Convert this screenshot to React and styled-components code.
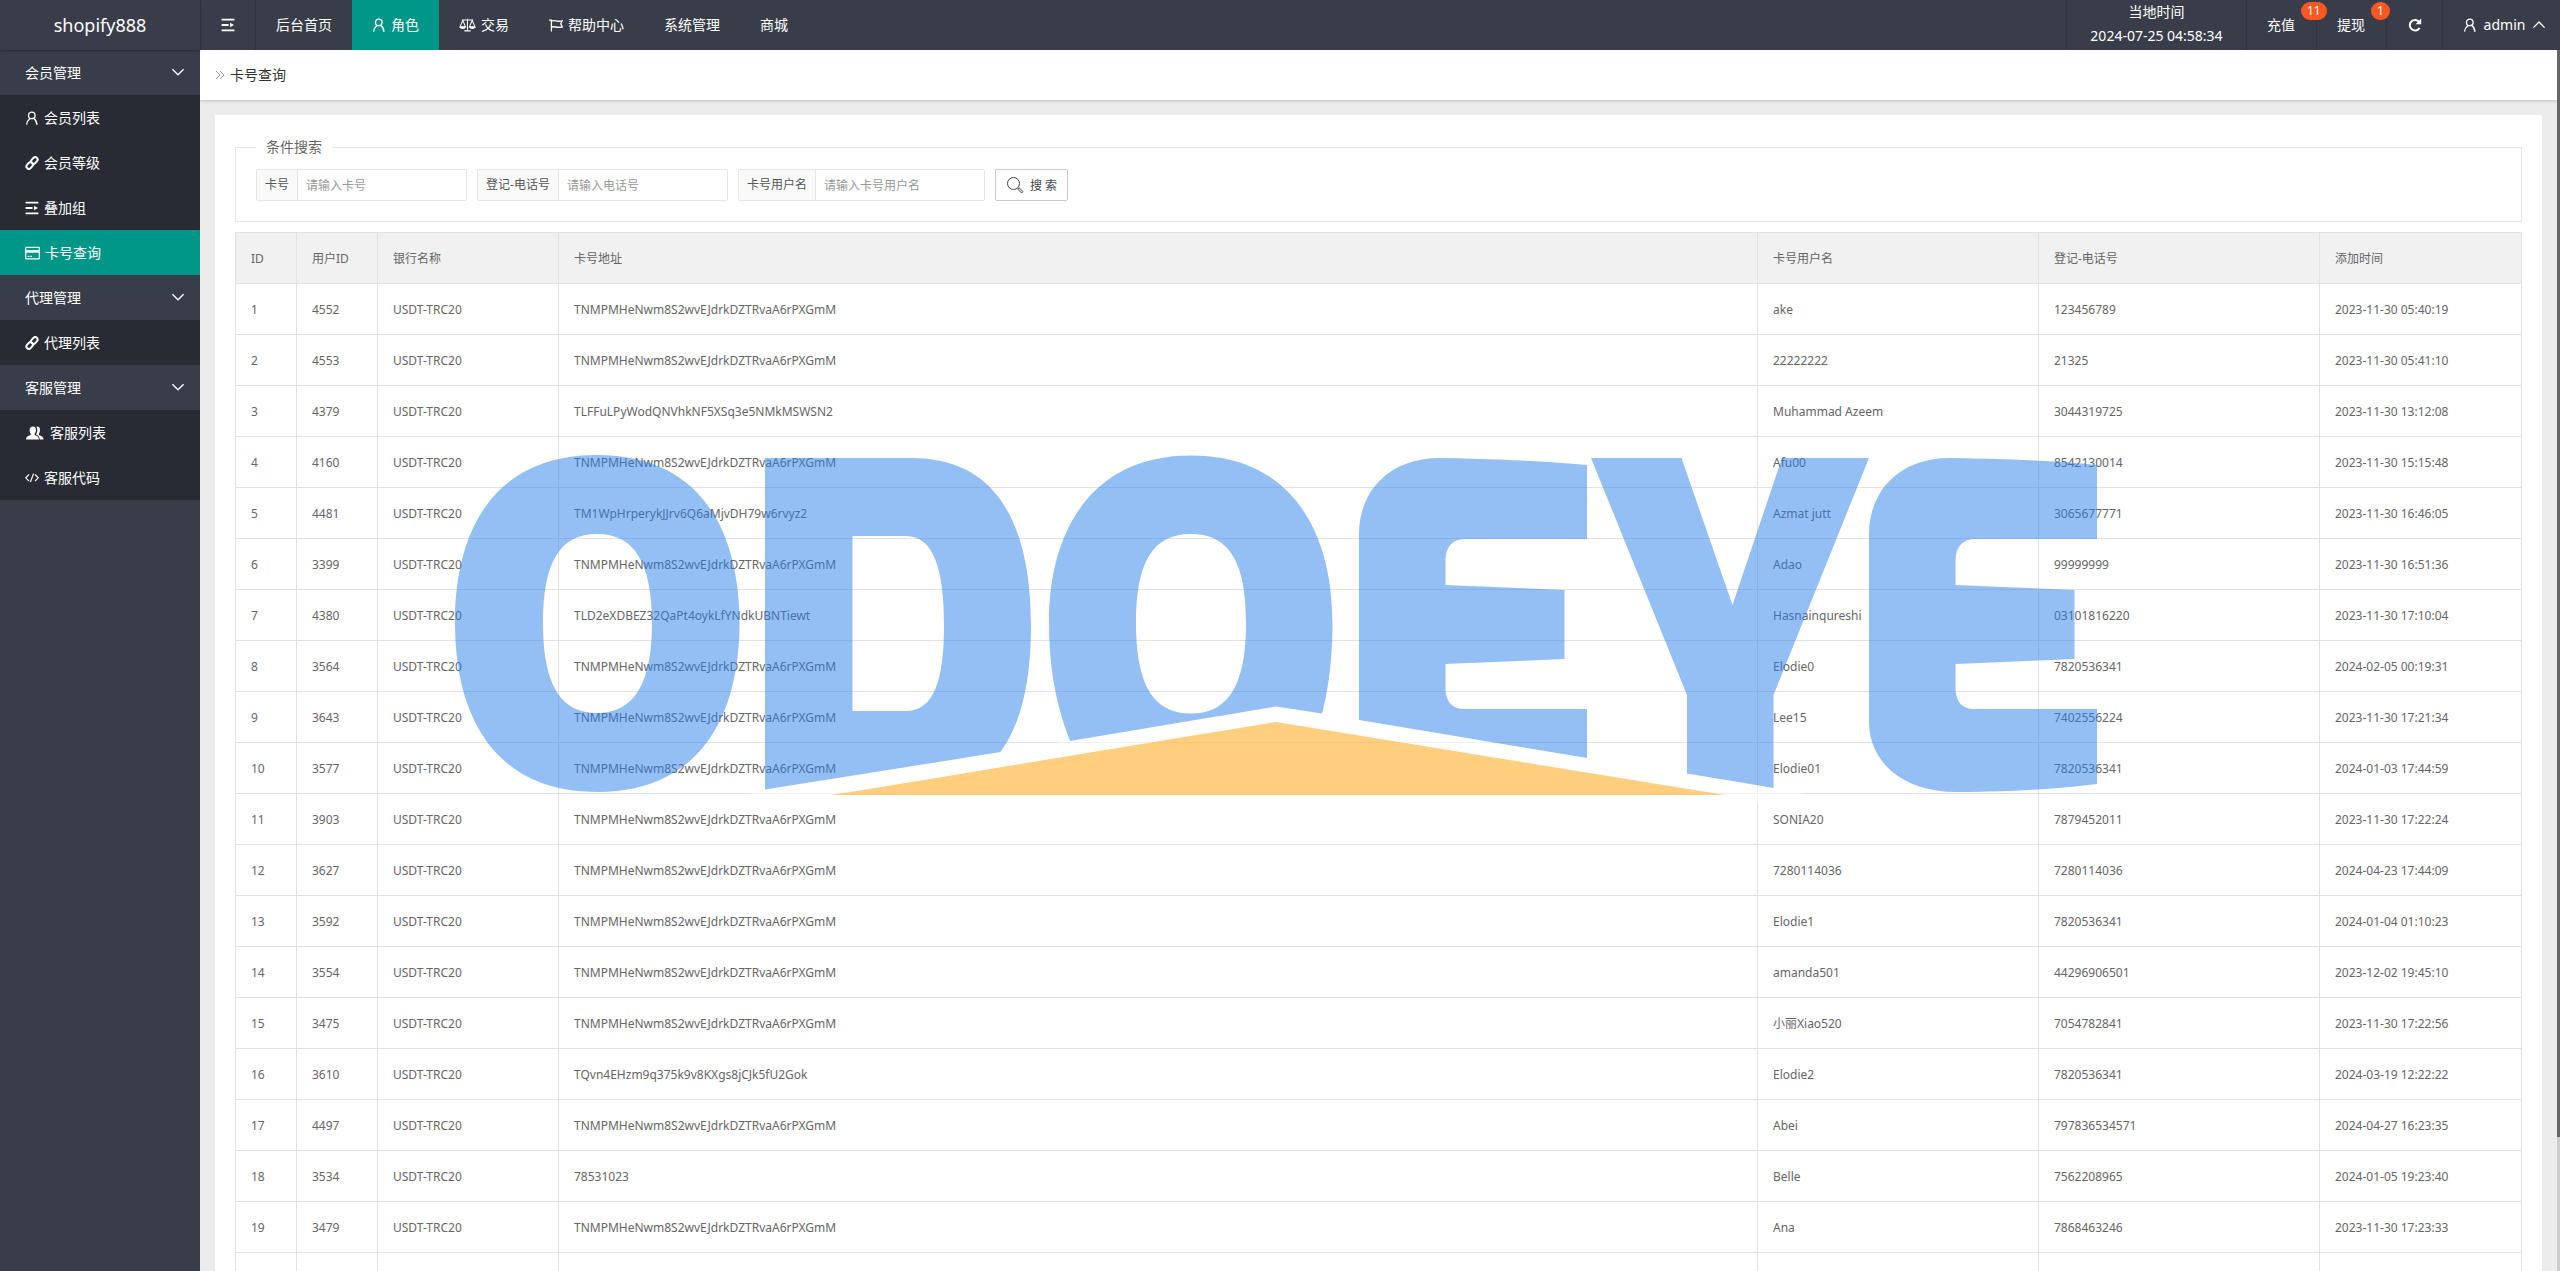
import React from "react";
import styled, { createGlobalStyle, css } from "styled-components";

const Global = createGlobalStyle`
  *, *::before, *::after { box-sizing: border-box; }
  html, body { margin: 0; height: 100%; overflow: hidden; }
  body, input, button, legend {
    font-family: "Noto Sans", "Noto Sans CJK SC", sans-serif;
  }
  body { font-size: 14px; line-height: 24px; color: #666; background: #fff; }
  a { color: inherit; text-decoration: none; }
`;

/* ---------- icons ---------- */
const Svg = styled.svg`
  flex: none;
  display: block;
  width: ${(p) => p.$w || 14}px;
  height: ${(p) => p.$h || 14}px;
  fill: none;
  stroke: currentColor;
  stroke-width: ${(p) => p.$sw || 1.3};
`;

const UserIcon = () => (
  <Svg viewBox="0 0 14 14">
    <circle cx="6.8" cy="4.4" r="3.3" />
    <path d="M1.600 13.600C1.800 10.800 3 9.200 5 7.600M8.800 7.400c2 1.400 2.900 3.400 3 6.200M11 13.200h1.600" />
  </Svg>
);
const ScaleIcon = () => (
  <Svg $w={17} $h={14} viewBox="0 0 18 14" $sw={1.1}>
    <path d="M9 .4v12.600M3 1.800h12M5.600 13.200h6.800M4 2.200 1 9h6zM14 2.200 11 9h6z" />
    <path d="M.7 9.200c.6 2.600 6 2.600 6.600 0zM10.700 9.200c.6 2.600 6 2.600 6.600 0z" fill="currentColor" stroke="none" />
  </Svg>
);
const FlagIcon = () => (
  <Svg viewBox="0 0 14 14">
    <path d="M0 2.200h2.400M2.400 1.600v12M2.400 3.200c3.400-1.800 4.800 1.200 10.800-.4l-1.400 3 1.400 3.200c-6 1.400-7.400-1.400-10.800.2" />
  </Svg>
);
const ListIcon = () => (
  <Svg viewBox="0 0 14 14" $sw={1.8}>
    <path d="M.6 1.700h12.800M.6 12.300h12.800M.6 7h7" />
    <path d="M9 4.800v4.400L13 7z" fill="currentColor" stroke="none" />
  </Svg>
);
const LinkIcon = () => (
  <Svg viewBox="0 0 14 14" $sw={2}>
    <rect x="-3.700" y="-2.400" width="7.400" height="4.800" rx="2.400" transform="translate(9.300 4.500) rotate(-48)" />
    <rect x="-3.700" y="-2.400" width="7.400" height="4.800" rx="2.400" transform="translate(4.700 9.500) rotate(-48)" />
  </Svg>
);
const CardIcon = () => (
  <Svg $w={15} viewBox="0 0 15 14" $sw={1.2}>
    <rect x=".7" y="1.400" width="13.600" height="11.400" rx=".4" />
    <path d="M1 5.400h13" strokeWidth="2.600" />
    <path d="M2.600 10.400h1.800M5.400 10.400h1.600" />
  </Svg>
);
const GroupIcon = () => (
  <Svg $w={20} viewBox="0 0 20 14">
    <path
      fill="currentColor"
      stroke="none"
      d="M8 .4c2 0 3 1.500 3 3.500 0 1.600-.6 2.800-1.300 3.700v1.400c2.500.8 4.100 1.800 4.300 4.600H1c.2-2.800 1.800-3.800 4.700-4.600V7.600C5 6.700 4.600 5.500 4.600 3.900 4.600 1.900 6 .4 8 .4zM12.200.6c2 0 2.800 1.500 2.800 3.300 0 1.600-.5 2.800-1.200 3.700v1.400c2.900.8 4.600 1.800 4.800 4.600h-3.800c-.1-2.500-1.300-4.100-3.800-5.100.8-1.200 1.300-2.700 1.300-4.400 0-1.300-.3-2.300-.9-3.300z"
    />
  </Svg>
);
const CodeIcon = () => (
  <Svg viewBox="0 0 14 14" $sw={1.2}>
    <path d="M4 3.400.8 6.800 4 10.200M10 3.400l3.200 3.400-3.200 3.400M8.600 2.600 5.400 11" />
  </Svg>
);
const Chevron = ({ up }) => (
  <Svg viewBox="0 0 14 14">
    <path d={up ? "M1.400 9.600 7 4l5.600 5.600" : "M1.400 4.200 7 9.800l5.600-5.600"} />
  </Svg>
);
const RefreshIcon = () => (
  <Svg viewBox="0 0 14 14" $sw={2}>
    <path d="M11.600 10A5.300 5.300 0 1 1 11.200 3.800" />
    <path d="M13.200.6v5.600H7.600z" fill="currentColor" stroke="none" />
  </Svg>
);
const SearchIcon = () => (
  <Svg $w={18} $h={18} viewBox="0 0 18 18" $sw={1}>
    <circle cx="7.500" cy="7.500" r="6" />
    <path d="M11.800 13l1.200-1.200 4 3.800-1.400 1.400z" />
  </Svg>
);
const CrumbIcon = () => (
  <Svg $w={10} $h={10} viewBox="0 0 10 10" $sw={1}>
    <path d="M1 1l4 4-4 4M5 1l4 4-4 4" />
  </Svg>
);

/* ---------- shell ---------- */
const Shell = styled.div`
  display: grid;
  grid-template: 50px minmax(0, 1fr) / 200px minmax(0, 1fr);
  height: 100vh;
`;
const Brand = styled.h1`
  margin: 0;
  font-size: 18px;
  font-weight: 400;
  line-height: 50px;
  text-align: center;
  color: #fff;
  background: #393d49;
  box-shadow: 0 1px 2px rgba(0, 0, 0, 0.3);
  z-index: 1;
`;
const TopBar = styled.header`
  display: flex;
  justify-content: space-between;
  color: #fff;
  background: #393d49;
`;
const Bar = styled.div`
  display: flex;
`;
const edge = css`
  border-left: 1px solid #31343f;
`;
const BarItem = styled.a`
  display: flex;
  align-items: center;
  gap: 5px;
  height: 50px;
  padding: 0 20px;
  background: ${(p) => (p.$active ? "#009688" : "transparent")};
  ${(p) => p.$edge && edge}
`;
const Account = styled(BarItem)`
  justify-content: space-between;
  width: 118px;
  padding-right: 14px;
`;
const Toggle = styled.button`
  display: flex;
  align-items: center;
  justify-content: center;
  width: 56px;
  padding: 0;
  color: inherit;
  background: none;
  border: solid #31343f;
  border-width: 0 1px;
`;
const Clock = styled.div`
  ${edge}
  width: 180px;
  text-align: center;
  white-space: nowrap;
`;
const Counter = styled(BarItem)`
  position: relative;
  width: 70px;
`;
const Badge = styled.span`
  position: absolute;
  top: 2px;
  left: 54px;
  z-index: 1;
  padding: 0 6px;
  font-size: 12px;
  line-height: 18px;
  background: #ff5722;
  border-radius: 9px;
`;
const IconButton = styled(Toggle)`
  border-width: 0 0 0 1px;
`;

/* ---------- side menu ---------- */
const Side = styled.nav`
  background: #393d49;
  color: #fff;
`;
const GroupHead = styled.button`
  display: flex;
  align-items: center;
  justify-content: space-between;
  width: 100%;
  height: 45px;
  padding: 0 15px 2px 25px;
  font-size: 14px;
  color: inherit;
  background: none;
  border: 0;
`;
const SubList = styled.ul`
  margin: 0;
  padding: 0;
  list-style: none;
  background: #282b33;
`;
const SubItem = styled.a`
  display: flex;
  align-items: center;
  gap: 5px;
  height: 45px;
  padding-left: 25px;
  background: ${(p) => (p.$active ? "#009688" : "transparent")};
`;

/* ---------- page ---------- */
const Frame = styled.div`
  display: flex;
  min-height: 0;
`;
const Page = styled.main`
  flex: 1;
  min-width: 0;
  overflow: hidden;
  background: #ececec;
`;
const Crumb = styled.div`
  display: flex;
  align-items: center;
  gap: 5px;
  height: 50px;
  padding-left: 15px;
  color: #333;
  background: #fff;
  box-shadow: 0 1px 3px rgba(0, 0, 0, 0.2);
`;
const CrumbMark = styled.span`
  color: #999;
`;
const Card = styled.section`
  margin: 15px;
  padding: 20px;
  background: #fff;
`;
const Track = styled.div`
  width: 3px;
  background: #ccc;
`;
const Thumb = styled.div`
  height: 89%;
  background: #666;
`;

/* ---------- search form ---------- */
const SearchBox = styled.fieldset`
  margin: 0 0 10px;
  padding: 10px 20px 20px;
  border: 1px solid #e6e6e6;
`;
const Legend = styled.legend`
  padding: 0 10px;
`;
const FormRow = styled.form`
  display: flex;
  gap: 10px;
`;
const Field = styled.div`
  display: flex;
  height: 32px;
  font-size: 12px;
  line-height: 30px;
  border: 1px solid #e6e6e6;
  border-radius: 2px;
`;
const FieldLabel = styled.label`
  padding: 0 8px;
  color: #555;
  background: #fafafa;
  border-right: 1px solid #e6e6e6;
`;
const FieldInput = styled.input`
  width: 168px;
  padding: 0 8px;
  font-size: 12px;
  background: #fff;
  border: 0;
  &::placeholder { color: #999; opacity: 1; }
`;
const SearchButton = styled.button`
  display: flex;
  align-items: center;
  gap: 6px;
  height: 32px;
  padding: 0 10px;
  font-size: 12px;
  color: #444;
  background: #fff;
  border: 1px solid #c9c9c9;
  border-radius: 2px;
`;

/* ---------- table ---------- */
const Table = styled.table`
  width: 100%;
  table-layout: fixed;
  border-collapse: collapse;
  font-size: 12px;
  line-height: 20px;
`;
const Col = styled.col`
  width: ${(p) => (p.$w ? p.$w + "px" : "auto")};
`;
const cell = css`
  height: 51px;
  padding: 2px 15px 0;
  font-weight: 400;
  text-align: left;
  white-space: nowrap;
  border: 1px solid #e2e2e2;
`;
const Th = styled.th`
  ${cell}
  background: #f1f1f1;
`;
const Td = styled.td`
  ${cell}
`;

/* ---------- logo laid over the page ---------- */
const Overlay = styled.svg`
  position: fixed;
  left: calc(50% - 825px);
  top: 455px;
  width: 1643px;
  height: 350px;
  pointer-events: none;
`;

const E_TOP =
  "M1359 535C1359 490 1390 458 1440 458C1500 459 1550 461 1587 465V539H1466Q1446 539 1445.500 560V585L1564.500 590V659L1445.500 664V690Q1447 709 1464 709H1587";

function Logo() {
  return (
    <Overlay viewBox="455 455 1643 350" aria-hidden="true">
      <path d="M690 804L1276 706.500 1865 804z" fill="#fff" opacity=".5" />
      <g fill="#2a80eb" opacity=".5" fillRule="evenodd">
        <path d="M597 455C700 455 739.500 530 739.500 623S700 792 597 792 455 716 455 623 494 455 597 455zM597 534C560 534 543 562 543 623S560 713 597 713 652 684 652 623 634 534 597 534z" />
        <path d="M765 458H912C1000 458 1031 530 1031 625C1031 680 1022 722 1000.500 752L765 789.500zM852.500 536V711H906C934 711 944 680 944 625S934 536 906 536z" />
        <path d="M1191 455.500C1290 455.500 1332.500 530 1332.500 623C1332.500 655 1329 688 1322 713.500L1276 706.500 1070 741C1056 705 1049 668 1049 623C1049 530 1092 455.500 1191 455.500zM1191 534C1153 534 1136 562 1136 623S1153 713.500 1191 713.500 1246 684 1246 623 1229 534 1191 534z" />
        <path d={E_TOP + "V758L1359 720z"} />
        <path d="M1591 458H1681.500L1732.500 605 1782 458H1869L1773.500 695V788L1687 773.500V695z" />
        <path d={E_TOP + "V784Q1525 792 1447 792C1390 792 1359 760 1359 722z"} transform="translate(510 0)" />
      </g>
      <path d="M832 795L1276 722 1725 795z" fill="#ffa000" opacity=".5" />
    </Overlay>
  );
}

/* ---------- data ---------- */
const NAV = [
  { text: "后台首页" },
  { text: "角色", icon: <UserIcon />, active: true },
  { text: "交易", icon: <ScaleIcon /> },
  { text: "帮助中心", icon: <FlagIcon /> },
  { text: "系统管理" },
  { text: "商城" },
];
const MENU = [
  {
    title: "会员管理",
    items: [
      { text: "会员列表", icon: <UserIcon /> },
      { text: "会员等级", icon: <LinkIcon /> },
      { text: "叠加组", icon: <ListIcon /> },
      { text: "卡号查询", icon: <CardIcon />, active: true },
    ],
  },
  { title: "代理管理", items: [{ text: "代理列表", icon: <LinkIcon /> }] },
  {
    title: "客服管理",
    items: [
      { text: "客服列表", icon: <GroupIcon /> },
      { text: "客服代码", icon: <CodeIcon /> },
    ],
  },
];
const FIELDS = [
  { id: "card", label: "卡号", hint: "请输入卡号" },
  { id: "phone", label: "登记-电话号", hint: "请输入电话号" },
  { id: "holder", label: "卡号用户名", hint: "请输入卡号用户名" },
];
const COLS = [
  ["ID", 61],
  ["用户ID", 81],
  ["银行名称", 181],
  ["卡号地址", 0],
  ["卡号用户名", 281],
  ["登记-电话号", 281],
  ["添加时间", 202],
];
const USDT = "USDT-TRC20";
const ADDR = "TNMPMHeNwm8S2wvEJdrkDZTRvaA6rPXGmM";
const ROWS = [
  ["4552", ADDR, "ake", "123456789", "2023-11-30 05:40:19"],
  ["4553", ADDR, "22222222", "21325", "2023-11-30 05:41:10"],
  ["4379", "TLFFuLPyWodQNVhkNF5XSq3e5NMkMSWSN2", "Muhammad Azeem", "3044319725", "2023-11-30 13:12:08"],
  ["4160", ADDR, "Afu00", "8542130014", "2023-11-30 15:15:48"],
  ["4481", "TM1WpHrperykJJrv6Q6aMjvDH79w6rvyz2", "Azmat jutt", "3065677771", "2023-11-30 16:46:05"],
  ["3399", ADDR, "Adao", "99999999", "2023-11-30 16:51:36"],
  ["4380", "TLD2eXDBEZ32QaPt4oykLfYNdkUBNTiewt", "Hasnainqureshi", "03101816220", "2023-11-30 17:10:04"],
  ["3564", ADDR, "Elodie0", "7820536341", "2024-02-05 00:19:31"],
  ["3643", ADDR, "Lee15", "7402556224", "2023-11-30 17:21:34"],
  ["3577", ADDR, "Elodie01", "7820536341", "2024-01-03 17:44:59"],
  ["3903", ADDR, "SONIA20", "7879452011", "2023-11-30 17:22:24"],
  ["3627", ADDR, "7280114036", "7280114036", "2024-04-23 17:44:09"],
  ["3592", ADDR, "Elodie1", "7820536341", "2024-01-04 01:10:23"],
  ["3554", ADDR, "amanda501", "44296906501", "2023-12-02 19:45:10"],
  ["3475", ADDR, "小丽Xiao520", "7054782841", "2023-11-30 17:22:56"],
  ["3610", "TQvn4EHzm9q375k9v8KXgs8jCJk5fU2Gok", "Elodie2", "7820536341", "2024-03-19 12:22:22"],
  ["4497", ADDR, "Abei", "797836534571", "2024-04-27 16:23:35"],
  ["3534", "78531023", "Belle", "7562208965", "2024-01-05 19:23:40"],
  ["3479", ADDR, "Ana", "7868463246", "2023-11-30 17:23:33"],
].map(([uid, ...rest], i) => [String(i + 1), uid, USDT, ...rest]);

export default function App() {
  return (
    <>
      <Global />
      <Shell>
        <Brand>shopify888</Brand>
        <TopBar>
          <Bar>
            <Toggle type="button" aria-label="菜单"><ListIcon /></Toggle>
            {NAV.map((n) => (
              <BarItem key={n.text} href="#" $active={n.active}>
                {n.icon}
                {n.text}
              </BarItem>
            ))}
          </Bar>
          <Bar>
            <Clock>
              <div>当地时间</div>
              <div>2024-07-25 04:58:34</div>
            </Clock>
            <Counter href="#" $edge>充值<Badge>11</Badge></Counter>
            <Counter href="#" $edge>提现<Badge>1</Badge></Counter>
            <IconButton type="button" aria-label="刷新"><RefreshIcon /></IconButton>
            <Account href="#" $edge>
              <UserIcon />
              admin
              <Chevron up />
            </Account>
          </Bar>
        </TopBar>
        <Side>
          {MENU.map((g) => (
            <div key={g.title}>
              <GroupHead type="button">{g.title}<Chevron /></GroupHead>
              <SubList>
                {g.items.map((it) => (
                  <li key={it.text}>
                    <SubItem href="#" $active={it.active}>{it.icon}{it.text}</SubItem>
                  </li>
                ))}
              </SubList>
            </div>
          ))}
        </Side>
        <Frame>
          <Page>
            <Crumb><CrumbMark><CrumbIcon /></CrumbMark>卡号查询</Crumb>
            <Card>
              <SearchBox>
                <Legend>条件搜索</Legend>
                <FormRow>
                  {FIELDS.map((f) => (
                    <Field key={f.id}>
                      <FieldLabel htmlFor={f.id}>{f.label}</FieldLabel>
                      <FieldInput id={f.id} placeholder={f.hint} />
                    </Field>
                  ))}
                  <SearchButton type="button"><SearchIcon />搜 索</SearchButton>
                </FormRow>
              </SearchBox>
              <Table>
                <colgroup>{COLS.map(([t, w]) => <Col key={t} $w={w} />)}</colgroup>
                <thead>
                  <tr>{COLS.map(([t]) => <Th key={t} scope="col">{t}</Th>)}</tr>
                </thead>
                <tbody>
                  {ROWS.map((r) => (
                    <tr key={r[0]}>{r.map((c, i) => <Td key={i}>{c}</Td>)}</tr>
                  ))}
                  <tr>{COLS.map(([t]) => <Td key={t} />)}</tr>
                </tbody>
              </Table>
            </Card>
          </Page>
          <Track><Thumb /></Track>
        </Frame>
      </Shell>
      <Logo />
    </>
  );
}
